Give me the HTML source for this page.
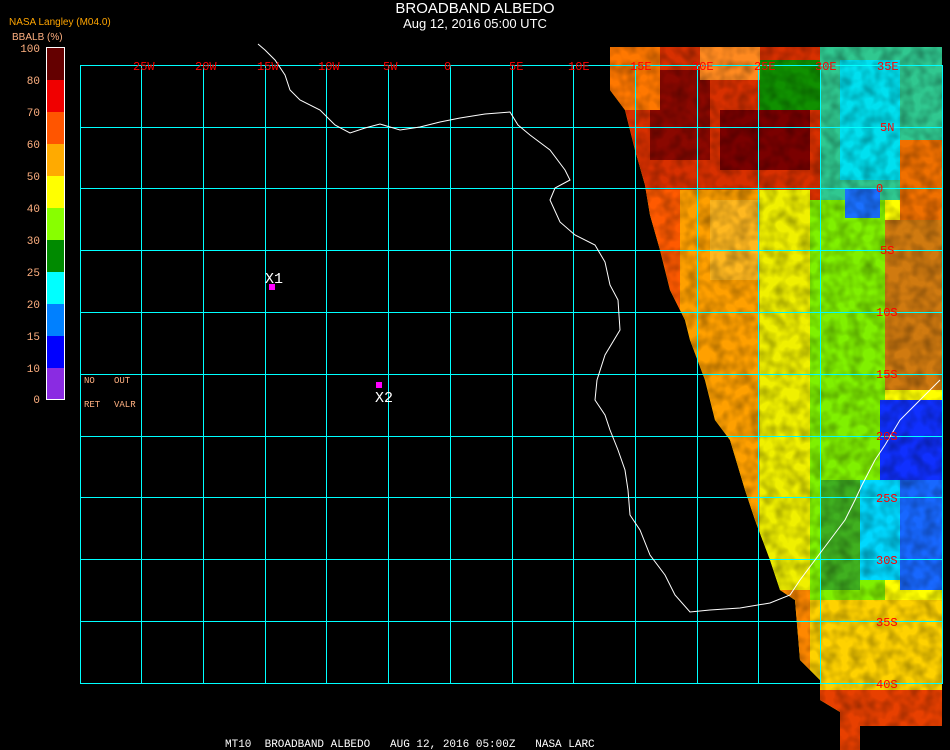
<!DOCTYPE html>
<html><head><meta charset="utf-8"><style>
html,body{margin:0;padding:0;background:#000;width:950px;height:750px;overflow:hidden}
body{position:relative;font-family:"Liberation Sans",sans-serif}
.t{position:absolute;white-space:nowrap}
</style></head><body>
<div class="t" style="left:0;width:950px;text-align:center;top:0;color:#fff;font-size:15px">BROADBAND ALBEDO</div>
<div class="t" style="left:0;width:950px;text-align:center;top:16px;color:#fff;font-size:13px">Aug 12, 2016 05:00 UTC</div>
<div class="t" style="left:9px;top:17px;color:#ffa500;font-size:10px">NASA Langley (M04.0)</div>
<div class="t" style="left:12px;top:32px;color:#ffb080;font-size:10px">BBALB (%)</div>
<svg width="950" height="750" style="position:absolute;left:0;top:0">
<defs>
<clipPath id="c"><polygon points="610,47 942,47 942,726 860,726 860,750 840,750 840,712 820,700 820,680 800,660 795,600 780,590 770,560 755,520 745,490 730,440 715,420 705,380 690,340 685,320 670,290 660,250 650,215 645,185 635,150 625,110 610,90"/></clipPath>
<filter id="n" x="0" y="0" width="100%" height="100%"><feTurbulence type="fractalNoise" baseFrequency="0.08" numOctaves="2" seed="3"/><feColorMatrix values="0 0 0 0 0  0 0 0 0 0  0 0 0 0 0  0 0 0 -1.6 1.05"/></filter>
</defs>
<g clip-path="url(#c)">
<rect x="600" y="40" width="350" height="720" fill="#ffff00"/>
<rect x="600" y="40" width="220" height="160" fill="#d83000"/>
<rect x="650" y="70" width="60" height="90" fill="#8a0800"/>
<rect x="720" y="110" width="90" height="60" fill="#7a0000"/>
<rect x="600" y="40" width="60" height="70" fill="#ff7800"/>
<rect x="700" y="40" width="60" height="40" fill="#ff8a20"/>
<rect x="820" y="40" width="130" height="160" fill="#30c890"/>
<rect x="840" y="60" width="60" height="120" fill="#00e0f0"/>
<rect x="760" y="60" width="60" height="50" fill="#109000"/>
<rect x="900" y="140" width="50" height="80" fill="#f07000"/>
<rect x="600" y="190" width="80" height="400" fill="#ff5a00"/>
<rect x="680" y="190" width="80" height="400" fill="#ffa000"/>
<rect x="710" y="200" width="60" height="80" fill="#ffb820"/>
<rect x="760" y="190" width="50" height="410" fill="#f0f000"/>
<rect x="810" y="200" width="75" height="400" fill="#80f000"/>
<rect x="885" y="220" width="57" height="170" fill="#d07a10"/>
<rect x="845" y="188" width="35" height="30" fill="#1a70ff"/>
<rect x="880" y="400" width="62" height="100" fill="#1030ff"/>
<rect x="860" y="480" width="50" height="100" fill="#00d8ff"/>
<rect x="900" y="480" width="42" height="110" fill="#1868ff"/>
<rect x="820" y="480" width="40" height="110" fill="#40b020"/>
<rect x="600" y="590" width="210" height="120" fill="#ff8800"/>
<rect x="810" y="600" width="140" height="100" fill="#ffd200"/>
<rect x="810" y="690" width="140" height="60" fill="#e84000"/>
<rect x="600" y="40" width="350" height="720" filter="url(#n)" opacity="0.35" fill="#000"/>
</g>
<g stroke="#00ffff" stroke-width="1" fill="none">
<rect x="80.5" y="65.5" width="862" height="618"/>
<path d="M141.5 65V683M203.5 65V683M265.5 65V683M326.5 65V683M388.5 65V683M450.5 65V683M512.5 65V683M573.5 65V683M635.5 65V683M697.5 65V683M758.5 65V683M820.5 65V683M80 127.5H943M80 188.5H943M80 250.5H943M80 312.5H943M80 374.5H943M80 436.5H943M80 497.5H943M80 559.5H943M80 621.5H943"/>
</g>
<polyline fill="none" stroke="#fff" stroke-width="1" points="258,44 265,50 275,60 285,75 290,90 300,100 320,110 335,125 350,133 365,128 380,124 400,130 420,127 440,122 460,118 485,114 510,112 518,125 530,135 550,150 565,170 570,180 555,188 550,200 560,222 575,235 595,245 605,262 610,285 618,300 620,330 605,355 597,380 595,400 605,415 610,430 618,450 625,470 628,490 630,515 640,530 650,555 665,575 675,595 690,612 710,610 740,608 770,603 790,595 800,580 815,560 830,540 845,520 855,500 862,485 875,460 885,445 900,420 915,405 940,380"/>
<rect x="46.5" y="47.5" width="18" height="352" fill="none" stroke="#fff"/>
<rect x="47" y="48" width="17" height="32" fill="#640000"/>
<rect x="47" y="80" width="17" height="32" fill="#f00000"/>
<rect x="47" y="112" width="17" height="32" fill="#ff5500"/>
<rect x="47" y="144" width="17" height="32" fill="#ffaa00"/>
<rect x="47" y="176" width="17" height="32" fill="#ffff00"/>
<rect x="47" y="208" width="17" height="32" fill="#88ff00"/>
<rect x="47" y="240" width="17" height="32" fill="#008a00"/>
<rect x="47" y="272" width="17" height="32" fill="#00ffff"/>
<rect x="47" y="304" width="17" height="32" fill="#0080ff"/>
<rect x="47" y="336" width="17" height="32" fill="#0000ff"/>
<rect x="47" y="368" width="17" height="31" fill="#8a2be2"/>
<rect x="269" y="284" width="6" height="6" fill="#ff00ff"/>
<rect x="376" y="382" width="6" height="6" fill="#ff00ff"/>
<g font-family="Liberation Mono,monospace" font-size="11" fill="#ffb080" text-anchor="end">
<text x="40" y="52">100</text><text x="40" y="84">80</text><text x="40" y="116">70</text><text x="40" y="148">60</text><text x="40" y="180">50</text><text x="40" y="212">40</text><text x="40" y="244">30</text><text x="40" y="276">25</text><text x="40" y="308">20</text><text x="40" y="340">15</text><text x="40" y="372">10</text><text x="40" y="403">0</text>
</g>
<g font-family="Liberation Mono,monospace" font-size="9" fill="#ffb080">
<text x="84" y="383">NO</text><text x="114" y="383">OUT</text><text x="84" y="407">RET</text><text x="114" y="407">VALR</text>
</g>
<g font-family="Liberation Mono,monospace" font-size="12" fill="#ff0000">
<text x="133" y="70">25W</text><text x="195" y="70">20W</text><text x="257" y="70">15W</text><text x="318" y="70">10W</text><text x="383" y="70">5W</text><text x="444" y="70">0</text><text x="509" y="70">5E</text><text x="568" y="70">10E</text><text x="630" y="70">15E</text><text x="692" y="70">20E</text><text x="754" y="70">25E</text><text x="815" y="70">30E</text><text x="877" y="70">35E</text>
<text x="880" y="131">5N</text><text x="876" y="192">0</text><text x="880" y="254">5S</text><text x="876" y="316">10S</text><text x="876" y="378">15S</text><text x="876" y="440">20S</text><text x="876" y="502">25S</text><text x="876" y="564">30S</text><text x="876" y="626">35S</text><text x="876" y="688">40S</text>
</g>
<g font-family="Liberation Mono,monospace" font-size="15" fill="#fff">
<text x="265" y="283">X1</text><text x="375" y="402">X2</text>
</g>
<text x="225" y="747" font-family="Liberation Mono,monospace" font-size="11" fill="#fff" xml:space="preserve">MT10  BROADBAND ALBEDO   AUG 12, 2016 05:00Z   NASA LARC</text>
</svg>
</body></html>
